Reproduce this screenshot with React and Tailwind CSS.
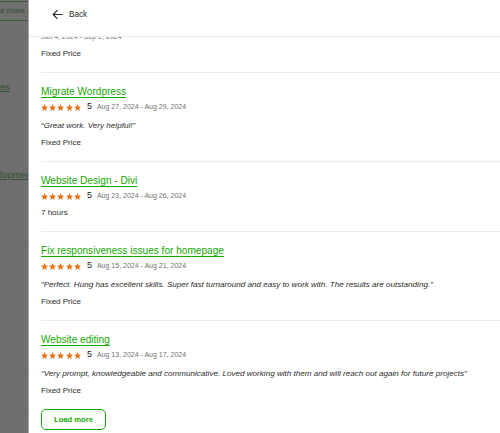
import React from "react";

const Star = () => (
  <svg viewBox="1.4 1.5 21.2 20.1" width="7.2" height="7" className="block">
    <polygon
      points="12,1.5 15,8.6 22.6,9.2 16.8,14.2 18.6,21.6 12,17.6 5.4,21.6 7.2,14.2 1.4,9.2 9,8.6"
      fill="#e8731a"
    />
  </svg>
);

const Stars = () => (
  <div className="flex items-center gap-[1px]">
    <Star />
    <Star />
    <Star />
    <Star />
    <Star />
  </div>
);

const Item = ({ title, date, quote, extra, last }) => (
  <div className={`border-t border-[#ebebeb] pt-[10px] ${last ? "" : "pb-[11px]"}`}>
    <div className="h-[16px] leading-[17px] text-[10.1px] text-[#14a800] underline underline-offset-[1.5px] decoration-[0.7px]">
      {title}
    </div>
    <div className="mt-[1px] h-[14px] flex items-center">
      <Stars />
      <span className="ml-[6px] text-[9px] text-[#222]">5</span>
      <span className="ml-[5px] text-[7px] text-[#717171]">{date}</span>
    </div>
    {quote && (
      <div className="mt-[5px] h-[14px] leading-[14px] text-[8.1px] italic text-[#2b2b2b] whitespace-nowrap">
        {quote}
      </div>
    )}
    <div className="mt-[3px] h-[14px] leading-[14px] text-[8px] text-[#2b2b2b]">{extra}</div>
  </div>
);

export default function App() {
  return (
    <div
      className="w-[500px] h-[433px] flex overflow-hidden bg-white"
      style={{ fontFamily: '"Liberation Sans", Arial, sans-serif' }}
    >
      <div className="w-[28px] shrink-0 bg-[#6f6f6f] flex flex-col overflow-hidden">
        <div className="mt-[1px] h-[20px] border-y border-[#3a5a3a] flex items-center whitespace-nowrap text-[8px] text-[#2f5230]">
          e more projects
        </div>
        <div className="mt-[59px] h-[14px] leading-[14px] text-[9.5px] text-[#2f5230] underline whitespace-nowrap">
          es
        </div>
        <div className="mt-[74px] h-[14px] leading-[14px] text-[9.5px] text-[#2f5230] underline whitespace-nowrap">
          lopment
        </div>
        <div className="mt-[63px] h-px bg-[#6a6a6a]" />
        <div className="mt-[124px] h-px bg-[#6a6a6a]" />
        <div className="mt-[42px] h-px bg-[#6a6a6a]" />
      </div>
      <div className="flex-1 flex flex-col border-l border-[#a6a6a6] bg-white min-w-0">
        <div className="h-[37px] shrink-0 border-b border-[#ececec] flex items-start pt-[8px] pl-[23px] gap-[6px] relative z-10 bg-white">
          <svg width="11" height="13" viewBox="0 0 11 13" className="block">
            <path d="M10.5 6.5H1.2M5.5 2.2 1.2 6.5l4.3 4.3" fill="none" stroke="#2b2b2b" strokeWidth="1.2" />
          </svg>
          <span className="h-[13px] leading-[13px] text-[8.2px] text-[#2b2b2b]">Back</span>
        </div>
        <div className="flex-1 overflow-hidden pl-[12px]">
          <div className="-mt-[7px]">
            <div className="pb-[11px]">
              <div className="h-[14px] leading-[14px] text-[7px] text-[#717171]">Jan 4, 2024 - Sep 2, 2024</div>
              <div className="mt-[3px] h-[14px] leading-[14px] text-[8px] text-[#2b2b2b]">Fixed Price</div>
            </div>
            <Item
              title="Migrate Wordpress"
              date="Aug 27, 2024 - Aug 29, 2024"
              quote={"\u201CGreat work. Very helpful!\u201D"}
              extra="Fixed Price"
            />
            <Item title="Website Design - Divi" date="Aug 23, 2024 - Aug 26, 2024" extra="7 hours" />
            <Item
              title="Fix responsiveness issues for homepage"
              date="Aug 15, 2024 - Aug 21, 2024"
              quote={"\u201CPerfect. Hung has excellent skills. Super fast turnaround and easy to work with. The results are outstanding.\u201D"}
              extra="Fixed Price"
            />
            <Item
              title="Website editing"
              date="Aug 13, 2024 - Aug 17, 2024"
              quote={"\u201CVery prompt, knowledgeable and communicative. Loved working with them and will reach out again for future projects\u201D"}
              extra="Fixed Price"
              last
            />
            <button className="mt-[11px] w-[65px] h-[21px] rounded-[5px] border border-[#14a800] text-[7.6px] font-bold text-[#14a800] flex items-center justify-center bg-white">
              Load more
            </button>
          </div>
        </div>
      </div>
    </div>
  );
}
